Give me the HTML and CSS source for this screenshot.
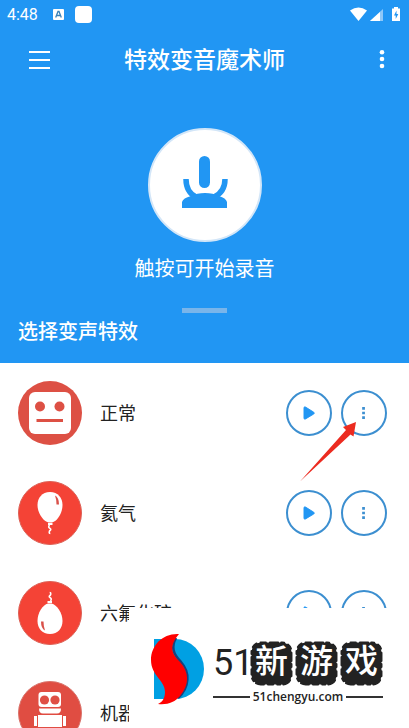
FILE: index.html
```html
<!DOCTYPE html>
<html lang="zh-CN">
<head>
<meta charset="utf-8">
<meta name="viewport" content="width=device-width, initial-scale=1">
<title>特效变音魔术师</title>
<link rel="stylesheet" href="styles.css">
</head>
<body>
<svg width="0" height="0" class="defs" aria-hidden="true">
  <symbol id="play" viewBox="0 0 46 46"><path d="M17.500 17.500v11q0 1.800 1.700 1l9-5.400q1.200-1 0-2l-9-5.600q-1.700-.8-1.700 1z" fill="#2196f3" stroke="#2196f3"/></symbol>
  <symbol id="dots" viewBox="0 0 46 46"><path d="M21 16.500h3v3h-3zM21 21.500h3v3h-3zM21 26.500h3v3h-3z" fill="#3c8fd0"/></symbol>
  <symbol id="balloon" viewBox="0 0 64 64"><path d="M32 11c-8 0-12.500 6-12.500 13 0 8 5.500 16 11 17.500h3.500c5.500-1.500 10.500-9.500 10.500-17.500 0-7-4.500-13-12.500-13z" fill="#fff"/><path d="M30 42h4.500v2H30z" fill="#fff"/><path d="M31.500 44c-3 4 4 3 0 6-1 2 .5 1.500 0 3" fill="none" stroke="#fff" stroke-width="1.600"/><path d="M37 14.500q4 2 4 9h-2.500q0-5-1.500-9z" fill="#d95049"/></symbol>
  <symbol id="stamp" viewBox="0 0 42 44"><rect x="1.500" y="1.500" width="39" height="41" rx="9" fill="#222" stroke="#222" stroke-width="2" stroke-linecap="round" stroke-dasharray="5 4 8 3 3 4"/></symbol>
</svg>
<div class="screen">
  <header class="top">
    <div class="status">
      <span class="clock">4:48</span>
      <svg class="badge-a" width="11" height="11" viewBox="0 0 11 11"><rect width="11" height="11" rx="1" fill="#fff"/><path d="M2.700 8.500 5 2.500h1l2.300 6M3.800 6.500h3.400" fill="none" stroke="#3b82b8" stroke-width="1.300"/></svg>
      <span class="badge-blank"></span>
      <svg class="signals" width="52" height="16" viewBox="0 0 52 16">
        <path d="M1 4.500Q9.500-1.500 18 4.500L9.500 15z" fill="#fff"/>
        <path d="M34 3v12H21z" fill="#8fc8f8"/><path d="M31 6v9H21z" fill="#fff"/>
        <path d="M45 1h4v1.500h2V15h-8V2.500h2z" fill="#fff"/><path d="M47.500 4.500 45 9.500h1.700v3.500L49.300 8h-1.800z" fill="#2196f3"/>
      </svg>
    </div>
    <div class="appbar">
      <button class="icon-btn" aria-label="菜单"><svg width="22" height="20" viewBox="0 0 22 20"><path d="M1 2h21M1 10h21M1 18h21" stroke="#fff" stroke-width="2"/></svg></button>
      <h1>特效变音魔术师</h1>
      <button class="icon-btn more" aria-label="更多"><svg width="6" height="20" viewBox="0 0 6 20" fill="#fff"><circle cx="3" cy="2.300" r="2.300"/><circle cx="3" cy="9" r="2.300"/><circle cx="3" cy="16" r="2.300"/></svg></button>
    </div>
    <button class="record" aria-label="录音">
      <svg width="46" height="58" viewBox="0 0 46 58">
        <rect x="17" y="0" width="11" height="32" rx="5.500" fill="#2196f3"/>
        <path d="M4 23Q4 36 14 41M43 23Q43 36 32 41" fill="none" stroke="#2196f3" stroke-width="5.500"/>
        <path d="M0 52v-6Q1 42 9 40Q15 37 23 37T37 40Q44 42 45 46v6z" fill="#2196f3"/>
      </svg>
    </button>
    <p class="hint">触按可开始录音</p>
    <div class="handle"></div>
    <h2>选择变声特效</h2>
  </header>
  <ul class="effects">
    <li>
      <svg class="avatar" viewBox="0 0 64 64"><circle cx="32" cy="32" r="32" fill="#dd5044"/><rect x="11" y="11" width="42" height="42" rx="6" fill="#fff"/><circle cx="22" cy="25.500" r="5" fill="#dd5044"/><circle cx="41.500" cy="25.500" r="5" fill="#dd5044"/><path d="M18.500 39.500h26.500" stroke="#dd5044" stroke-width="3"/></svg>
      <span class="name">正常</span>
      <button class="round" aria-label="播放"><svg viewBox="0 0 46 46"><use href="#play"/></svg></button>
      <button class="round" aria-label="更多选项"><svg viewBox="0 0 46 46"><use href="#dots"/></svg></button>
      <svg class="arrow" width="58" height="61" viewBox="0 0 58 61"><path d="M57 1 44 6l3 3L1 60.500 51.500 13.500l3 2z" fill="#ec2b20"/></svg>
    </li>
    <li>
      <svg class="avatar" viewBox="0 0 64 64"><circle cx="32" cy="32" r="31.500" fill="#f44336" stroke="#dc6055"/><use href="#balloon"/></svg>
      <span class="name">氦气</span>
      <button class="round" aria-label="播放"><svg viewBox="0 0 46 46"><use href="#play"/></svg></button>
      <button class="round" aria-label="更多选项"><svg viewBox="0 0 46 46"><use href="#dots"/></svg></button>
    </li>
    <li>
      <svg class="avatar" viewBox="0 0 64 64"><circle cx="32" cy="32" r="31.500" fill="#f44336" stroke="#dc6055"/><g transform="rotate(180 32 32)"><use href="#balloon"/></g></svg>
      <span class="name">六氟化硫</span>
      <button class="round" aria-label="播放"><svg viewBox="0 0 46 46"><use href="#play"/></svg></button>
      <button class="round" aria-label="更多选项"><svg viewBox="0 0 46 46"><use href="#dots"/></svg></button>
    </li>
    <li>
      <svg class="avatar" viewBox="0 0 64 64"><circle cx="32" cy="32" r="31.500" fill="#e04d42" stroke="#d9736b"/><rect x="20.500" y="11" width="22.500" height="15" rx="3" fill="#fff"/><circle cx="26.500" cy="19" r="4.600" fill="#df4f45"/><circle cx="37" cy="19" r="4.600" fill="#df4f45"/><path d="M21 27.500h22q0 5-4 5H25q-4 0-4-5zM20 34h24v12H20zM16 35h3v10h-3zM45 35h3v10h-3zM22 47h8v6h-8zM34 47h8v6h-8z" fill="#fff"/></svg>
      <span class="name">机器人</span>
      <button class="round" aria-label="播放"><svg viewBox="0 0 46 46"><use href="#play"/></svg></button>
      <button class="round" aria-label="更多选项"><svg viewBox="0 0 46 46"><use href="#dots"/></svg></button>
    </li>
  </ul>
</div>
<aside class="brand">
  <svg width="54" height="72" viewBox="0 0 54 72">
    <path d="M3 6h21a29 30 0 0 1 0 60H3z" fill="#00a0e3"/>
    <path d="M25 5C20 14 22 21 30 29 39 39 39 54 27 65" fill="none" stroke="#15437f" stroke-width="2.500"/>
    <path d="M28 1C12 0 0 12 0 27c0 16 14 20 14 32 0 5-2 10-7 12 10 1 17-2 22-8 10-12 9-24 0-34-9-9-11-16-1-28z" fill="#f00"/>
  </svg>
  <div class="brand-text">
    <div class="brand-name">
      <span class="num">51</span>
      <span class="tile"><svg viewBox="0 0 42 44"><use href="#stamp"/></svg><b>新</b></span>
      <span class="tile"><svg viewBox="0 0 42 44"><use href="#stamp"/></svg><b>游</b></span>
      <span class="tile"><svg viewBox="0 0 42 44"><use href="#stamp"/></svg><b>戏</b></span>
    </div>
    <div class="brand-url"><span>51chengyu.com</span></div>
  </div>
</aside>
</body>
</html>
```
FILE: styles.css
```css
* { box-sizing: border-box; }
body {
  margin: 0;
  background: #fff;
  color: #222;
  font-family: Roboto, "Noto Sans CJK SC", sans-serif;
}
button { padding: 0; border: 0; background: none; display: grid; place-items: center; }
h1, h2, p, ul { margin: 0; padding: 0; }
.defs { position: absolute; }
.screen { height: 100vh; overflow: hidden; }
.top {
  display: flex;
  flex-direction: column;
  align-items: center;
  background: #2196f3;
  color: #fff;
}
.status {
  align-self: stretch;
  display: flex;
  align-items: center;
  height: 28px;
  padding: 0 8px 0 7px;
}
.clock { width: 46px; font-size: 16px; }
.badge-blank {
  width: 17px;
  height: 17px;
  margin-left: 11px;
  border-radius: 4px;
  background: #fff;
}
.signals { margin-left: auto; }
.appbar {
  align-self: stretch;
  display: flex;
  align-items: center;
  justify-content: space-between;
  height: 64px;
  padding: 0 12px;
}
.icon-btn { width: 54px; height: 40px; }
.icon-btn.more { width: 30px; margin-left: 24px; }
h1 { padding-top: 2px; font-size: 23px; line-height: 32px; font-weight: 500; }
.record {
  width: 114px;
  height: 114px;
  margin-top: 36px;
  border: 2px solid #d3e6f8;
  border-radius: 50%;
  background: #fff;
}
.hint { margin-top: 11px; font-size: 20px; line-height: 32px; }
.handle { width: 45px; height: 5px; margin-top: 23px; background: #79b5ea; }
h2 {
  align-self: stretch;
  padding: 3px 18px 15px;
  font-size: 20px;
  line-height: 32px;
  font-weight: 500;
}
.effects { list-style: none; }
.effects li {
  position: relative;
  display: flex;
  align-items: center;
  gap: 9px;
  height: 100px;
  padding: 0 22px 0 18px;
}
.avatar { width: 64px; height: 64px; flex: none; }
.name { flex: 1; padding: 2px 0 0 9px; font-size: 18px; line-height: 28px; }
.round {
  width: 46px;
  height: 46px;
  border: 2px solid #3c8fd0;
  border-radius: 50%;
}
.round svg { width: 42px; height: 42px; }
.arrow { position: absolute; right: 52px; top: 58px; }
.brand {
  position: fixed;
  right: 0;
  bottom: 0;
  display: flex;
  gap: 8px;
  width: 280px;
  height: 120px;
  padding: 25px 27px 0 22px;
  background: #fff;
}
.brand > svg { flex: none; }
.brand-text { flex: 1; padding-top: 8px; }
.brand-name { display: flex; align-items: center; justify-content: flex-end; gap: 2px; height: 44px; }
.num {
  flex: none;
  width: 35px;
  font-size: 36px;
  line-height: 44px;
}
.tile {
  flex: none;
  display: grid;
  width: 43px;
  height: 44px;
  color: #fff;
  font-size: 33px;
  line-height: 42px;
  text-align: center;
}
.tile > * { grid-area: 1 / 1; }
.tile b { font-weight: 500; }
.brand-url {
  display: flex;
  align-items: center;
  gap: 3px;
  margin-top: 3px;
  font-family: "Open Sans", sans-serif;
  font-size: 12px;
  line-height: 18px;
  font-weight: 600;
}
.brand-url::before, .brand-url::after { content: ""; flex: 1; height: 2px; background: #333; }
```
